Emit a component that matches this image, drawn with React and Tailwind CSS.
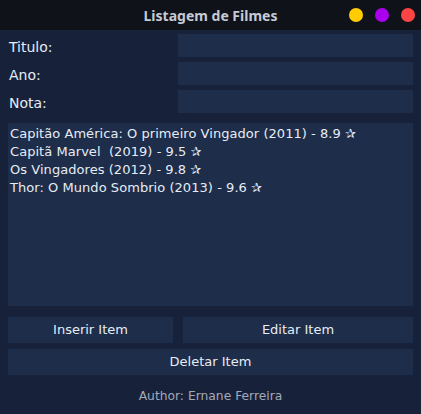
import { useState } from "react";

const filmes = [
  "Capitão América: O primeiro Vingador (2011) - 8.9 ✰",
  "Capitã Marvel  (2019) - 9.5 ✰",
  "Os Vingadores (2012) - 9.8 ✰",
  "Thor: O Mundo Sombrio (2013) - 9.6 ✰",
];

function Campo({ label }) {
  return (
    <div className="flex items-center h-[23px]">
      <label className="w-[170px] pl-[1px] pt-[3px] text-[14px] text-[#e6ecf5]">{label}</label>
      <input className="flex-1 h-full bg-[#1e2d4a] outline-none px-1 text-[#e6ecf5]" />
    </div>
  );
}

export default function App() {
  const [selected, setSelected] = useState(null);

  return (
    <div
      className="w-[421px] h-[414px] bg-[#17213a] flex flex-col"
      style={{ fontFamily: '"DejaVu Sans", sans-serif' }}
    >
      {/* Title bar */}
      <div className="h-[30px] bg-[#0f1219] relative flex items-center justify-center">
        <span className="text-[14px] font-bold text-[#c4cad6] font-['Noto_Sans',sans-serif]">
          Listagem de Filmes
        </span>
        <div className="absolute right-[6px] top-[8px] flex gap-[12px]">
          <span className="w-[14px] h-[14px] rounded-full bg-[#ffcc00]" />
          <span className="w-[14px] h-[14px] rounded-full bg-[#aa00ee]" />
          <span className="w-[14px] h-[14px] rounded-full bg-[#ff4444]" />
        </div>
      </div>

      <div className="flex flex-col px-[8px] pt-[4px]">
        <div className="flex flex-col gap-[5px]">
          <Campo label="Titulo:" />
          <Campo label="Ano:" />
          <Campo label="Nota:" />
        </div>

        {/* Lista */}
        <div className="mt-[10px] h-[183px] bg-[#1e2d4a] pt-[2px] pl-[2px]">
          {filmes.map((f, i) => (
            <div
              key={i}
              onClick={() => setSelected(i)}
              className={`text-[13px] tracking-[0.05px] leading-[18px] text-[#e6ecf5] whitespace-pre ${
                selected === i ? "bg-[#2f4570]" : ""
              }`}
            >
              {f}
            </div>
          ))}
        </div>

        <div className="mt-[11px] flex gap-[10px]">
          <button className="w-[165px] h-[26px] bg-[#1e2d4a] text-[13px] text-[#e6ecf5]">
            Inserir Item
          </button>
          <button className="flex-1 h-[26px] bg-[#1e2d4a] text-[13px] text-[#e6ecf5]">
            Editar Item
          </button>
        </div>
        <button className="mt-[6px] h-[26px] bg-[#1e2d4a] text-[13px] text-[#e6ecf5]">
          Deletar Item
        </button>

        <div className="mt-[12px] text-center text-[12.3px] text-[#a3a9b6]">
          Author: Ernane Ferreira
        </div>
      </div>
    </div>
  );
}
